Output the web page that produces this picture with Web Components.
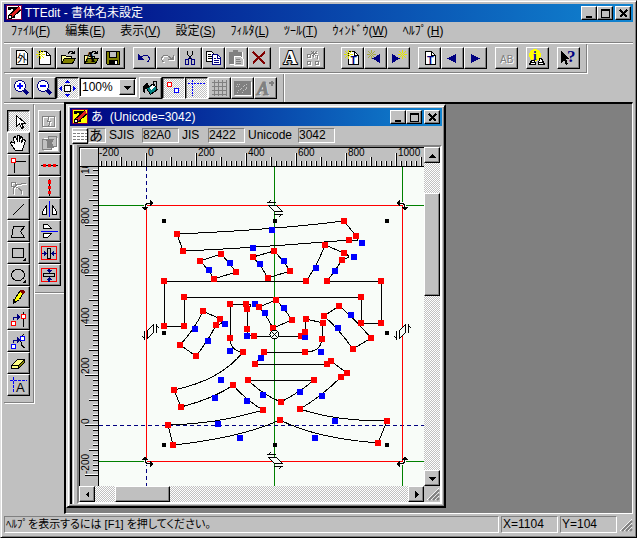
<!DOCTYPE html>
<html lang="ja">
<head>
<meta charset="utf-8">
<title>TTEdit - 書体名未設定</title>
<style>
html, body { margin: 0; height: 100%; }
body { font: 12px/14px "Liberation Sans", "Noto Sans CJK JP", sans-serif; color: #000; background: #c0c0c0; overflow: hidden;
  --face: #c0c0c0; --shade: #808080;
  --dither: repeating-conic-gradient(#fff 0 25%, #c0c0c0 0 50%) 0 0 / 2px 2px; }
</style>
</head>
<body>
<tt-app></tt-app>
<script>
const define = (name, markup) => {
  const t = document.createElement('template');
  customElements.define(name, class extends HTMLElement {
    connectedCallback() {
      if (this.shadowRoot) return;
      t.innerHTML = typeof markup === 'function' ? markup(this) : markup;
      this.attachShadow({ mode: 'open' }).append(t.content.cloneNode(true));
    }
  });
};

const spark = (x, y, c) => `<path fill="${c}" d="M${x} ${y - 4}h1v3h-1zM${x} ${y + 2}h1v3h-1zM${x - 4} ${y}h3v1h-3zM${x + 2} ${y}h3v1h-3zM${x - 3} ${y - 3}h1v1h1v1h1v1h1v1h1v1h1v1h1v1h-1v-1h-1v-1h-1v-1h-1v-1h-1v-1h-1v-1h-1zM${x + 3} ${y - 3}h1v1h-1v1h-1v1h-1v1h-1v1h-1v1h-1v1h-1v-1h1v-1h1v-1h1v-1h1v-1h1v-1h1z"/>`;
const page = '<path fill="#fff" stroke="#000" d="M3.5 1.5h7l4 4v9h-11z"/><path fill="none" stroke="#000" d="M10.5 1.5v4h4"/>';
const tpage = '<path fill="#fff" stroke="#000" d="M4.5 1.5h6l4 4v9h-10z"/><path fill="none" stroke="#000" d="M10.5 1.5v4h4"/><text x="6" y="14" font-size="11" font-weight="bold" fill="#000080">T</text>';
const folder = '<path fill="#ffffa0" stroke="#000" d="M2.5 12.5v-7h4l1 1h5v2"/><path fill="#808000" stroke="#000" d="M2.5 13.5l3-5h11l-3 5z"/><path fill="none" stroke="#000" d="M9 3.5l2-2h2l2 2M15.500 1v3M12 3.5h4"/>';
const grey = (s) => `<g transform="translate(1 1)" stroke="#fff" fill="none">${s}</g><g stroke="#808080" fill="none">${s}</g>`;
const sq = (x, y, c) => `<rect x="${x}.5" y="${y}.5" width="4" height="4" fill="#fff" stroke="${c}"/>`;
const mag = '<circle cx="7" cy="6" r="5.5" fill="#fff" stroke="#000080"/><path stroke="#000080" stroke-width="3" d="M11 10l4 4"/>';
const ICONS = {
  glyph: '<path fill="#fff" stroke="#000" d="M3.500.5h8l3 3v11h-11z"/><text x="4" y="12" font-size="10">外</text>',
  fresh: page + spark(4, 4, '#e8e800'),
  open: folder,
  openfont: folder + '<text x="3" y="12" font-family="Liberation Serif" font-weight="bold" font-size="14">A</text>',
  save: '<path fill="#808000" stroke="#000" d="M1.5 1.5h13v13h-12l-1-1z"/><path fill="#c0c0c0" stroke="#000" d="M4.5 1.5h7v6h-7z"/><path d="M4 10h9v5H4z"/><path fill="#fff" d="M10 11h2v3h-2z"/>',
  undo: '<path fill="none" stroke="#000080" d="M4 8.500c3-4 7-4 8.500-2s1 4-1 5.500"/><path fill="#000080" d="M2 4v6h6z"/>',
  redo: grey('<path d="M12 8.500c-3-4-7-4-8.500-2s-1 4 1 5.500M9 9.500h5v-5M11 8.500h2v-2"/>'),
  cut: '<path stroke="#000" d="M5.500 1v3l4 6M10.500 1v3l-4 6" fill="none"/><g fill="none" stroke="#000080"><path d="M7.500 7.500l-2 2.500M8.500 7.500l2 2.500"/><ellipse cx="5" cy="12" rx="2" ry="2.500"/><ellipse cx="11" cy="12" rx="2" ry="2.500"/></g>',
  copy: '<path fill="#fff" stroke="#000" d="M1.500 1.500h5l3 3v7h-8z"/><path stroke="#000" d="M3 4.500h3M3 6.500h4M3 8.500h4"/><path fill="#fff" stroke="#000080" d="M7.500 4.500h5l3 3v7h-8z"/><path stroke="#000080" fill="none" d="M12.500 5v3h3M9 8.500h2M9 10.500h5M9 12.500h5"/>',
  paste: '<path fill="#fff" d="M2 2h13v13H2z"/><path fill="#808080" stroke="#808080" d="M1.500 2.500h12v11h-12zM5.500.5h4v2h-4z"/><path fill="#c0c0c0" stroke="#fff" d="M6.500 6.500h6l3 3v6h-9z"/><path stroke="#808080" d="M8 9.500h4M8 11.500h5M8 13.500h5"/>',
  del: '<path stroke="#800000" stroke-width="2" fill="none" d="M2 2l12 12M14 2L2 13"/>',
  font: '<text x="1.500" y="14" font-family="Liberation Serif" font-weight="bold" font-size="19" fill="#fff" stroke="#000" stroke-width="2" paint-order="stroke">A</text>',
  outline: grey('<path d="M2.500 4.500h3v3h-3zM2.500 11.500h3v3h-3zM10.500 11.500h3v3h-3zM6 3.500h6M8.500 1v6M6.500 1.500l5 5M11.500 1.500l-5 5M12.500 5v4"/>'),
  tnew: tpage + spark(4, 4, '#e0e000'),
  tprev: spark(4, 4, '#a8a840') + '<path fill="#000080" d="M13 4v9L5 8.500z"/>',
  tnext: spark(12, 4, '#e8e800') + '<path fill="#000080" d="M2 4v9l8-4.500z"/>',
  tdoc: tpage,
  prev: '<path fill="#000080" d="M12 4v9L3 8.500z"/>',
  next: '<path fill="#000080" d="M4 4v9l9-4.500z"/>',
  ab: '<text x="3" y="14" font-size="10" fill="#fff">AB</text><text x="2" y="13" font-size="10" fill="#808080">AB</text>',
  info: '<circle cx="6" cy="5" r="6" fill="#ff0"/><path fill="#fff" stroke="#000" d="M.5 14.500l2-4h3l1 4zM9.500 14.500l1-6h2l3 6zM1 12.500h5M10 12.500h5"/><text x="4" y="10" font-family="Liberation Serif" font-weight="bold" font-size="13" fill="#0000c0">i</text>',
  help: '<path d="M1 1v12l3-3 2 5 2-1-2-5h4z"/><text x="7" y="12" font-family="Liberation Serif" font-weight="bold" font-size="17" fill="#000080">?</text>',
  zoomin: mag + '<path stroke="#00f" stroke-width="2" d="M4 6h6M7 3v6"/>',
  zoomout: mag + '<path stroke="#00f" stroke-width="2" d="M4 6h6"/>',
  fit: '<path fill="#fff" stroke="#000" d="M5.500 5.500h6v6h-6z"/><path fill="#0000e0" d="M6 3h5L8.500 0zM6 14h5l-2.500 3zM3 6v5L0 8.500zM14 6v5l3-2.500z"/>',
  fill: '<path fill="#008080" stroke="#000" d="M4.500 8.500l7-5 4 6-7 5z"/><path fill="#000" d="M1 11c-1-5 2-8 5-8l1 4-4 2v5z"/><path fill="#fff" d="M7 8l4-3 2 2-4 3z"/><path stroke="#000" fill="none" d="M11.500 6V1.500h3v9"/>',
  points: sq(2, 2, '#f00') + sq(9, 8, '#00f'),
  guides: '<path stroke="#00f" stroke-dasharray="2 1" d="M0 3.500h17M4.500 0v16"/>',
  grid: '<path stroke="#808080" d="M1 2.500h15M1 6.500h15M1 10.500h15M1 14.500h15M3.500 0v16M7.500 0v16M11.500 0v16M15.500 0v16"/>',
  image: '<path fill="#fff" d="M1 2h17v14H1z"/><path fill="#808080" d="M0 1h17v14H0z"/><path stroke="#c0c0c0" fill="none" stroke-dasharray="1 1" d="M3 4.500h4M2 6.500h4M3 12.500l9-8 3 2M8 12.500l5-5"/>',
  smooth: '<text x="1" y="16" font-family="Liberation Serif" font-weight="bold" font-style="italic" font-size="18" fill="#fff">A</text><text x="0" y="15" font-family="Liberation Serif" font-weight="bold" font-style="italic" font-size="18" fill="#808080" stroke="#808080">A</text><path stroke="#808080" stroke-width="2" d="M12 3h5M14.500 1v5"/>',
  arrow: '<path fill="#fff" stroke="#000" d="M6.500 2.500v11l3-3 2 5 2-1-2-4h4z"/>',
  hand: '<path fill="#fff" stroke="#000" d="M5.500 15.500l-5-7 1-2 3 2-1-6 2-1 2 5V.5h2v6l1-5 2 1-1 5 2-3 2 1-2 6-1 4z"/>',
  corner: '<path fill="none" stroke="#000" d="M4 4.500h12M4.500 6v10"/>' + sq(1, 1, '#f00'),
  curve: grey('<path d="M1.500 3.500h4v4h-4zM3.500 15v-6l3-3 9-2M6 8.500c5 1 6 4 6 6"/>'),
  line: '<path stroke="#000" d="M3 14L14 3"/>',
  poly: '<path fill="none" stroke="#000" d="M1.500 14.500h13l-4-6 4-5h-11z"/>',
  rect: '<path fill="none" stroke="#000" d="M2.500 3.500h11v9h-11z"/><path d="M16 12v4h-4z"/>',
  ellipse: '<ellipse cx="8" cy="8" rx="6.500" ry="5.500" fill="none" stroke="#000"/><path d="M16 12v4h-4z"/>',
  pencil: '<path fill="#ff0" stroke="#000" d="M3.500 14.500l2-6 5-7 3 2-4 7z"/><path fill="#800000" d="M10 1h3l2 2-2 2-3-2z"/><path d="M3 15v-5l3 2z"/>',
  addpt: '<path stroke="#000" d="M13.500 1v15"/>' + sq(1, 10, '#f00') + sq(11, 3, '#f00') + '<path stroke="#000080" fill="none" d="M3.500 9V6.500h5"/><path fill="#000080" d="M7 3v6l3-3z"/>',
  addcp: '<path stroke="#000" fill="none" d="M13.500 1l-3 5 1 6 3 3"/>' + sq(1, 11, '#00f') + sq(10, 3, '#00f') + '<path stroke="#000080" fill="none" d="M3.500 10V7.500h5"/><path fill="#000080" d="M7 4v6l3-3z"/>',
  eraser: '<path fill="#ffff80" stroke="#000" d="M1.500 10.500l6-6h7v3l-6 6h-7z"/><path fill="#808000" stroke="#000" d="M8.500 13.500v-3l6-6v3zM1.500 10.500h7"/>',
  atext: '<path stroke="#00f" stroke-dasharray="3 1" d="M0 3.500h17M3.500 0v16"/><text x="6" y="15" font-size="13">A</text>',
  brk: grey('<path d="M1.500 3.500h12v10h-12zM8.500 3l-2 5h3l-2 5"/>'),
  merge: '<path fill="#fff" d="M3 3h14v13H3z"/><path fill="#c0c0c0" stroke="#808080" d="M1.500 4.500h9v10h-9zM7.500 1.500h8v10h-8z"/><path fill="#808080" d="M5 4h8l-2 4 2 5H6V8z"/>',
  hmid: '<path stroke="#000" d="M0 8.500h17"/><path fill="#f00" d="M2 7h3v3H2zM7 7h3v3H7zM12 7h3v3h-3z"/>',
  vmid: '<path stroke="#000" d="M8.500 0v17"/><path fill="#f00" d="M7 1h3v4H7zM7 7h3v3H7zM7 12h3v3H7z"/>',
  fliph: '<path fill="#fff" stroke="#000" d="M1.500 13.500v-3l4-6v9zM11.500 4.500v9h4v-3z"/><path stroke="#00f" d="M8.500 0v16"/>',
  flipv: '<path fill="#fff" stroke="#000" d="M2.500 5.500v-4h4l4 4zM2.500 10.500h8l-4 4h-4z"/><path stroke="#00f" d="M0 8.500h17"/>',
  cenh: '<path fill="none" stroke="#f00" d="M.5 1.500h15v13H.5z"/><path fill="none" stroke="#000" d="M6.500 3.500h3v10h-3z"/><path fill="#000080" d="M1 8h2V6l3 2.500L3 11V9H1zM15 8h-2V6l-3 2.500 3 2.500V9h2z"/>',
  cenv: '<path fill="none" stroke="#f00" d="M.5 1.500h15v13H.5z"/><path fill="none" stroke="#000" d="M2.500 6.500h11v3h-11z"/><path fill="#000080" d="M7 2h2v1h2L8 6 5 3h2zM7 15h2v-2h2l-3-3-3 3h2z"/>',
  app: '<path fill="#fff" stroke="#800040" d="M.5.5h15v14H.5z"/><path d="M2 2h12v3h-3V4H9v9H7V4H5v1H2z"/><path stroke="#000" stroke-width="5" d="M4 12l10-9"/><path stroke="#e02020" stroke-width="3" d="M5 11l9-8"/><circle cx="4" cy="12" r="2" fill="#fff" stroke="#000"/>',
  appdoc: '<path fill="#ff0" stroke="#800040" d="M.5.5h15v14H.5z"/><path d="M2 2h12v3h-3V4H9v9H7V4H5v1H2z"/><path stroke="#000" stroke-width="5" d="M4 12l10-9"/><path stroke="#e02020" stroke-width="3" d="M5 11l9-8"/><circle cx="4" cy="12" r="2" fill="#fff" stroke="#000"/>',
  min: '<path d="M4 10h6v2H4z"/>',
  max: '<path fill="none" stroke="#000" d="M3.500 3.500h8v8h-8z"/><path d="M3 3h9v2H3z"/>',
  close: '<path stroke="#000" stroke-width="2" d="M4 4l7 7M11 4l-7 7"/>',
  up: '<path d="M4 10h7L7.500 6z"/>', down: '<path d="M4 6h7l-3.500 4z"/>',
  left: '<path d="M9 4v7L5.500 7.500z"/>', right: '<path d="M6 4v7l3.500-3.500z"/>',
  list: '<path fill="#fff" d="M0 2h14v11H0z"/><path stroke="#808080" stroke-dasharray="3 1" d="M0 4.500h14M0 7.500h14M0 10.500h14"/>',
};
define('tt-icon', (el) => `<style>:host{display:block;flex:none}svg{display:block;overflow:visible;font-family:"Liberation Sans","Noto Sans CJK JP",sans-serif}</style>
<svg width="17" height="16" viewBox="0 0 17 16" shape-rendering="crispEdges" aria-hidden="true">${ICONS[el.getAttribute('name')]}</svg>`);

define('tt-button', (el) => `<style>
:host{display:block;width:23px;height:22px;flex:none}
button{display:block;width:100%;height:100%;margin:0;padding:2px;border:1px solid;border-color:#fff #000 #000 #fff;background:var(--face);box-shadow:inset -1px -1px var(--shade)}
:host([pressed]) button{background:var(--dither);border-color:#000 #fff #fff #000;box-shadow:inset 1px 1px var(--shade)}
:host([small]) button{padding:0}
:host([small]){width:16px;height:14px}
:host([small]) tt-icon{margin-top:-1px}
:host([square]){width:16px;height:16px}
:host([square]) tt-icon{margin-top:0}
</style><button type="button" aria-label="${el.getAttribute('icon')}"><tt-icon name="${el.getAttribute('icon')}"></tt-icon></button>`);

define('tt-title', (el) => `<style>
:host{display:flex;align-items:center;height:18px;padding:0 2px;background:linear-gradient(90deg,#000080,#1084d0);color:#fff;flex:none}
span{flex:1;padding-left:2px;white-space:pre;overflow:hidden}
div{display:flex;gap:2px}.pair{gap:0}
</style><tt-icon name="${el.getAttribute('icon')}"></tt-icon><span><slot></slot></span>
<div><div class="pair"><tt-button small icon="min"></tt-button><tt-button small icon="max"></tt-button></div><tt-button small icon="close"></tt-button></div>`);

define('tt-menu', `<style>
:host{display:flex;gap:15px;height:20px;padding:0 7px;align-items:center;border-bottom:1px solid var(--shade);box-shadow:0 1px #fff;flex:none;margin-bottom:1px}
button{font:inherit;color:inherit;border:0;background:none;padding:0 0 2px;margin:0;white-space:nowrap}
</style>` + [['ﾌｧｲﾙ','F'],['編集','E'],['表示','V'],['設定','S'],['ﾌｨﾙﾀ','L'],['ﾂｰﾙ','T'],['ｳｨﾝﾄﾞｳ','W'],['ﾍﾙﾌﾟ','H']]
  .map(([t, k]) => `<button type="button">${t}(<u>${k}</u>)</button>`).join(''));

/* A group string: icons separated by spaces, "|" for a gap, "*" for a pressed button. */
const buttons = (s) => s.split(' ').map((n) => n === '|' ? '<i></i>' : n === 'combo' ? '<tt-zoom></tt-zoom>'
  : `<tt-button icon="${n.replace('*', '')}"${n.endsWith('*') ? ' pressed' : ''}></tt-button>`).join('');
define('tt-toolbar', (el) => `<style>
:host{display:flex;align-items:flex-start;align-self:flex-start;padding:3px 6px;height:22px;border-right:1px solid var(--shade);border-bottom:1px solid var(--shade);box-shadow:1px 1px #fff;margin-bottom:1px;flex:none}
:host([vertical]){flex-direction:column;height:auto;padding:6px 3px}
i{width:8px;flex:none}
</style>${buttons(el.getAttribute('items'))}`);

define('tt-zoom', `<style>
:host{display:flex;position:relative;width:58px;height:20px;margin-right:2px;box-sizing:border-box;border:1px solid;border-color:var(--shade) #fff #fff var(--shade);box-shadow:inset 1px 1px #000;background:#fff}
select{appearance:none;width:100%;border:0;margin:0;padding:0 0 0 2px;background:none;font:12px/16px "Liberation Sans",sans-serif;color:#000}
tt-button{position:absolute;right:1px;top:1px;pointer-events:none}
</style><select aria-label="Zoom"><option>100%</option></select><tt-button small square icon="down"></tt-button>`);

define('tt-scroll', (el) => { const v = el.hasAttribute('vertical'); return `<style>
:host{display:flex;flex-direction:${v ? 'column' : 'row'};background:var(--dither)}
.before{flex:${v ? 30 : 20}}.thumb{flex:${v ? 102 : 53};background:var(--face);border:1px solid;border-color:#fff #000 #000 #fff;box-shadow:inset -1px -1px var(--shade);box-sizing:border-box}.after{flex:${v ? 175 : 240}}
</style><tt-button small square icon="${v ? 'up' : 'left'}"></tt-button><div class="before"></div><div class="thumb"></div><div class="after"></div><tt-button small square icon="${v ? 'down' : 'right'}"></tt-button>`; });

define('tt-grip', `<style>:host{display:block;background:var(--face)}svg{display:block;margin:auto 0 0 auto}</style>
<svg width="14" height="15" viewBox="0 0 14 15"><path stroke="#fff" d="M1 14L13 2M5 14l8-8M9 14l4-4"/><path stroke="#808080" stroke-width="2" d="M3 14L13 4M7 14l6-6M11 14l2-2"/></svg>`);

const rulerMarks = (vertical) => {
  let s = '';
  for (let k = -10; k < 60; k++) {
    const p = vertical ? 425 - k * 5 : 146 + k * 5;
    if (vertical ? p < 168 || p > 485 : p < 100 || p > 423) continue;
    const n = k % 10 === 0 ? 13 : k % 5 === 0 ? 9 : 5;
    s += vertical
      ? `<path stroke="#fff" d="M${98 - n} ${p - 1}.5h${n}"/><path stroke="#000" d="M${98 - n} ${p}.5h${n}"/>`
      : `<path stroke="#fff" d="M${p - 1}.5 ${166 - n}v${n}"/><path stroke="#000" d="M${p}.5 ${166 - n}v${n}"/>`;
  }
  for (let k = -1; k < 6; k++) {
    s += vertical ? `<text transform="translate(89 ${424 - k * 50}) rotate(-90)">${k * 200}</text>` : `<text x="${k < 0 ? 99 : 148 + k * 50}" y="156">${k * 200}</text>`;
  }
  return s;
};
define('tt-ruler', (el) => { const v = el.hasAttribute('vertical'); return `<style>
:host{display:block;min-width:0;min-height:0;overflow:hidden;background:var(--face);border:solid #000;border-width:${v ? '0 1px 0 1px' : '1px 0'}}
svg{display:block;font-size:10px;font-family:"Liberation Sans",sans-serif}
</style><svg width="${v ? 18 : 325}" height="${v ? 319 : 18}" viewBox="${v ? '80 167 18 319' : '99 148 325 18'}" shape-rendering="crispEdges">${rulerMarks(v)}</svg>`; });

/* Glyph contours: on-curve points "x,y", off-curve control points "~x,y". */
const CONTOURS = [
  '177,234 ~272,230 344,221 356,236 ~362,243 349,240 ~253,248 183,251',
  '200,261 221,254 ~230,263 236,272 214,279 ~209,270',
  '253,257 274,251 ~284,261 290,271 268,278 ~260,264',
  '325,245 344,253 ~354,257 342,260 ~335,271 327,281 381,281 381,323 361,323 361,297 184,297 184,326 164,326 164,281 306,281 ~316,268',
  '203,311 220,319 ~225,324 216,325 ~208,341 196,356 180,345 ~195,329',
  '230,304 246,304 ~255,304 247,309 247,329 ~247,336 254,336 301,336 ~305,337 305,332 306,319 323,323 322,339 ~321,352 305,352 264,352 ~261,358 255,364 327,364 331,361 347,373 341,377 ~322,396 300,409 ~335,421 387,421 378,443 ~315,438 280,420 ~240,438 173,445 168,425 ~218,424 263,410 ~247,401 233,385 ~215,398 181,407 174,390 ~221,380 243,352 ~230,351 230,338',
  '248,380 314,380 ~300,392 281,402 ~263,395',
  '259,307 276,300 ~284,308 292,320 273,328 ~265,313',
  '324,316 339,306 ~351,315 371,338 353,349 ~338,328',
];
const glyph = () => {
  let d = '', dots = '';
  for (const c of CONTOURS) {
    const pts = c.split(' ');
    let off = false;
    pts.forEach((p, i) => {
      const ctl = p[0] === '~', [x, y] = p.replace('~', '').split(',').map(Number);
      d += i === 0 ? `M${x} ${y}` : ctl ? `Q${x} ${y}` : off ? ` ${x} ${y}` : `L${x} ${y}`;
      off = ctl;
      dots += `<rect x="${x - 3}" y="${y - 3}" width="6" height="6" fill="${ctl ? '#00f' : '#f00'}"/>`;
    });
    if (off) d += ' ' + pts[0].replace(',', ' ');
    d += 'Z';
  }
  return `<path fill="none" stroke="#000" d="${d}"/>${dots}`;
};
const corner = (t) => `<g transform="${t}"><path fill="#f8fcf8" d="M-2-3h7v3h-4v4h-3z"/><path fill="none" stroke="#000" d="M-1 2q0-4 5-4"/><path d="M4-5v6l4-3zM-4 2h6l-3 4z"/></g>`;
const shear = (t) => `<g transform="${t}"><path fill="#f8fcf8" stroke="#000" d="M-6.500-2.500h8l6 6h-8z"/><path stroke="#000" fill="none" d="M-8-5.500H1M-7-5.500l3-2M-1 6.500h9M7 6.500l-3 2"/></g>`;
define('tt-canvas', `<style>:host{display:block;background:#f8fcf8;overflow:hidden;min-width:0;min-height:0}svg{display:block}</style>
<svg width="325" height="319" viewBox="99 167 325 319" shape-rendering="crispEdges" role="img" aria-label="あ">
<g stroke="#008000"><path d="M99 205.500h47M403 205.500h21M99 461.500h47M403 461.500h21M274.500 167v319M402.500 167v38M402.500 462v24"/></g>
<g stroke="#000080" stroke-dasharray="4 3"><path d="M146.500 167v38M146.500 462v24M99 425.500h325"/></g>
<path fill="none" stroke="#f00" d="M146.500 205.500h256v256h-256z"/>
${glyph()}
${[[164,221],[275,221],[387,221],[164,333],[387,333],[164,445],[275,445],[387,445]].map(([x, y]) => `<rect x="${x - 2}" y="${y - 2}" width="4" height="4"/>`).join('')}
<circle cx="274.500" cy="334.500" r="4.500" fill="#f8fcf8" stroke="#000"/><path stroke="#000" d="M271 331l7 7M278 331l-7 7"/>
${corner('translate(146 205)')}${corner('translate(404 205) scale(-1 1)')}${corner('translate(146 462) scale(1 -1)')}${corner('translate(404 462) scale(-1 -1)')}
${shear('translate(275 208)')}${shear('translate(275 460)')}${shear('translate(150 332) rotate(-90)')}${shear('translate(402 332) rotate(-90)')}
</svg>`);

define('tt-codes', `<style>
:host{display:flex;align-items:center;gap:3px;height:19px;padding-left:2px;flex:none}
tt-button{margin-right:-3px}
label,output{box-sizing:border-box;height:15px;line-height:13px;white-space:nowrap;border:1px solid transparent}
output{width:37px;border-color:var(--shade) #fff #fff var(--shade)}
label{border-width:1px 0;width:30px}
.ch{width:18px;font-size:14px}
.j{width:23px}.u{width:47px}
</style><tt-button small square icon="list"></tt-button><output class="ch">あ</output>
<label for="s">SJIS</label><output id="s">82A0</output><label class="j" for="j">JIS</label><output id="j">2422</output><label class="u" for="u">Unicode</label><output id="u">3042</output>`);

define('tt-document', `<style>
:host{display:flex;flex-direction:column;box-sizing:border-box;background:var(--face);padding:2px;border:2px solid;border-color:#dfdfdf #000 #000 #dfdfdf;box-shadow:inset 1px 1px #fff,inset -1px -1px var(--shade)}
.body{flex:1;display:flex;min-height:0;border-left:2px solid #000;padding-left:1px}
.split{width:2px;margin-right:1px;border-left:1px solid #fff}
.view{flex:1;display:grid;grid-template:20px 1fr 16px/20px 1fr 16px;border:2px solid;border-color:var(--shade) #fff #fff var(--shade);min-width:0}
.corner{border:1px solid #000;box-shadow:inset 1px 1px #fff}
.v{grid-row:1/3;grid-column:3}.h{grid-column:1/3}
</style><tt-title icon="appdoc">あ  (Unicode=3042)</tt-title><tt-codes></tt-codes>
<div class="body"><div class="split"></div><div class="view"><div class="corner"></div><tt-ruler></tt-ruler><tt-scroll class="v" vertical></tt-scroll>
<tt-ruler vertical></tt-ruler><tt-canvas></tt-canvas><tt-scroll class="h"></tt-scroll><tt-grip></tt-grip></div></div>`);

define('tt-status', `<style>
:host{display:flex;gap:2px;height:19px;padding-top:1px;align-items:center;flex:none}
div{box-sizing:border-box;height:17px;border:1px solid;border-color:var(--shade) #fff #fff var(--shade);padding-left:1px;width:57px;line-height:15px;white-space:nowrap}
.msg{flex:1;font-size:11px;font-feature-settings:"palt"}
</style><div class="msg">ﾍﾙﾌﾟを表示するには [F1] を押してください。</div><div>X=1104</div><div>Y=104</div><tt-grip></tt-grip>`);

define('tt-app', `<style>
:host{display:flex;flex-direction:column;height:100vh;box-sizing:border-box;background:var(--face);padding:3px;border:1px solid;border-color:#dfdfdf #000 #000 #dfdfdf;box-shadow:inset 1px 1px #fff,inset -1px -1px var(--shade)}
.main{flex:1;display:flex;min-height:0}
.second{border-right-color:transparent;box-shadow:0 1px #fff;margin-left:1px;margin-right:-2px}
.rail{display:flex;align-items:flex-start;width:60px;border-top:1px solid var(--shade);box-shadow:inset 0 1px #fff;box-sizing:border-box;padding-top:1px;flex:none}
.desk{flex:1;position:relative;background:#808080;border:solid;border-width:2px 1px 1px 2px;border-color:#000 #fff #fff #000;min-width:0;overflow:hidden}
tt-document{position:absolute;left:0;top:0;width:380px;height:404px}
.last{border-bottom-color:transparent;box-shadow:1px 0 #fff;margin-bottom:-1px}
</style>
<tt-title icon="app">TTEdit - 書体名未設定</tt-title><tt-menu></tt-menu>
<tt-toolbar items="glyph fresh open openfont save | undo redo cut copy paste del | font outline | | tnew tprev tnext | tdoc prev next | ab | info | help"></tt-toolbar>
<tt-toolbar class="last" items="zoomin zoomout fit* combo fill points* guides* grid image smooth"></tt-toolbar>
<div class="main"><div class="rail"><tt-toolbar vertical items="arrow* hand corner curve line poly rect ellipse pencil addpt addcp eraser atext"></tt-toolbar>
<tt-toolbar class="second" vertical items="brk merge hmid vmid fliph flipv cenh cenv"></tt-toolbar></div>
<div class="desk"><tt-document></tt-document></div></div><tt-status></tt-status>`);
</script>
</body>
</html>
